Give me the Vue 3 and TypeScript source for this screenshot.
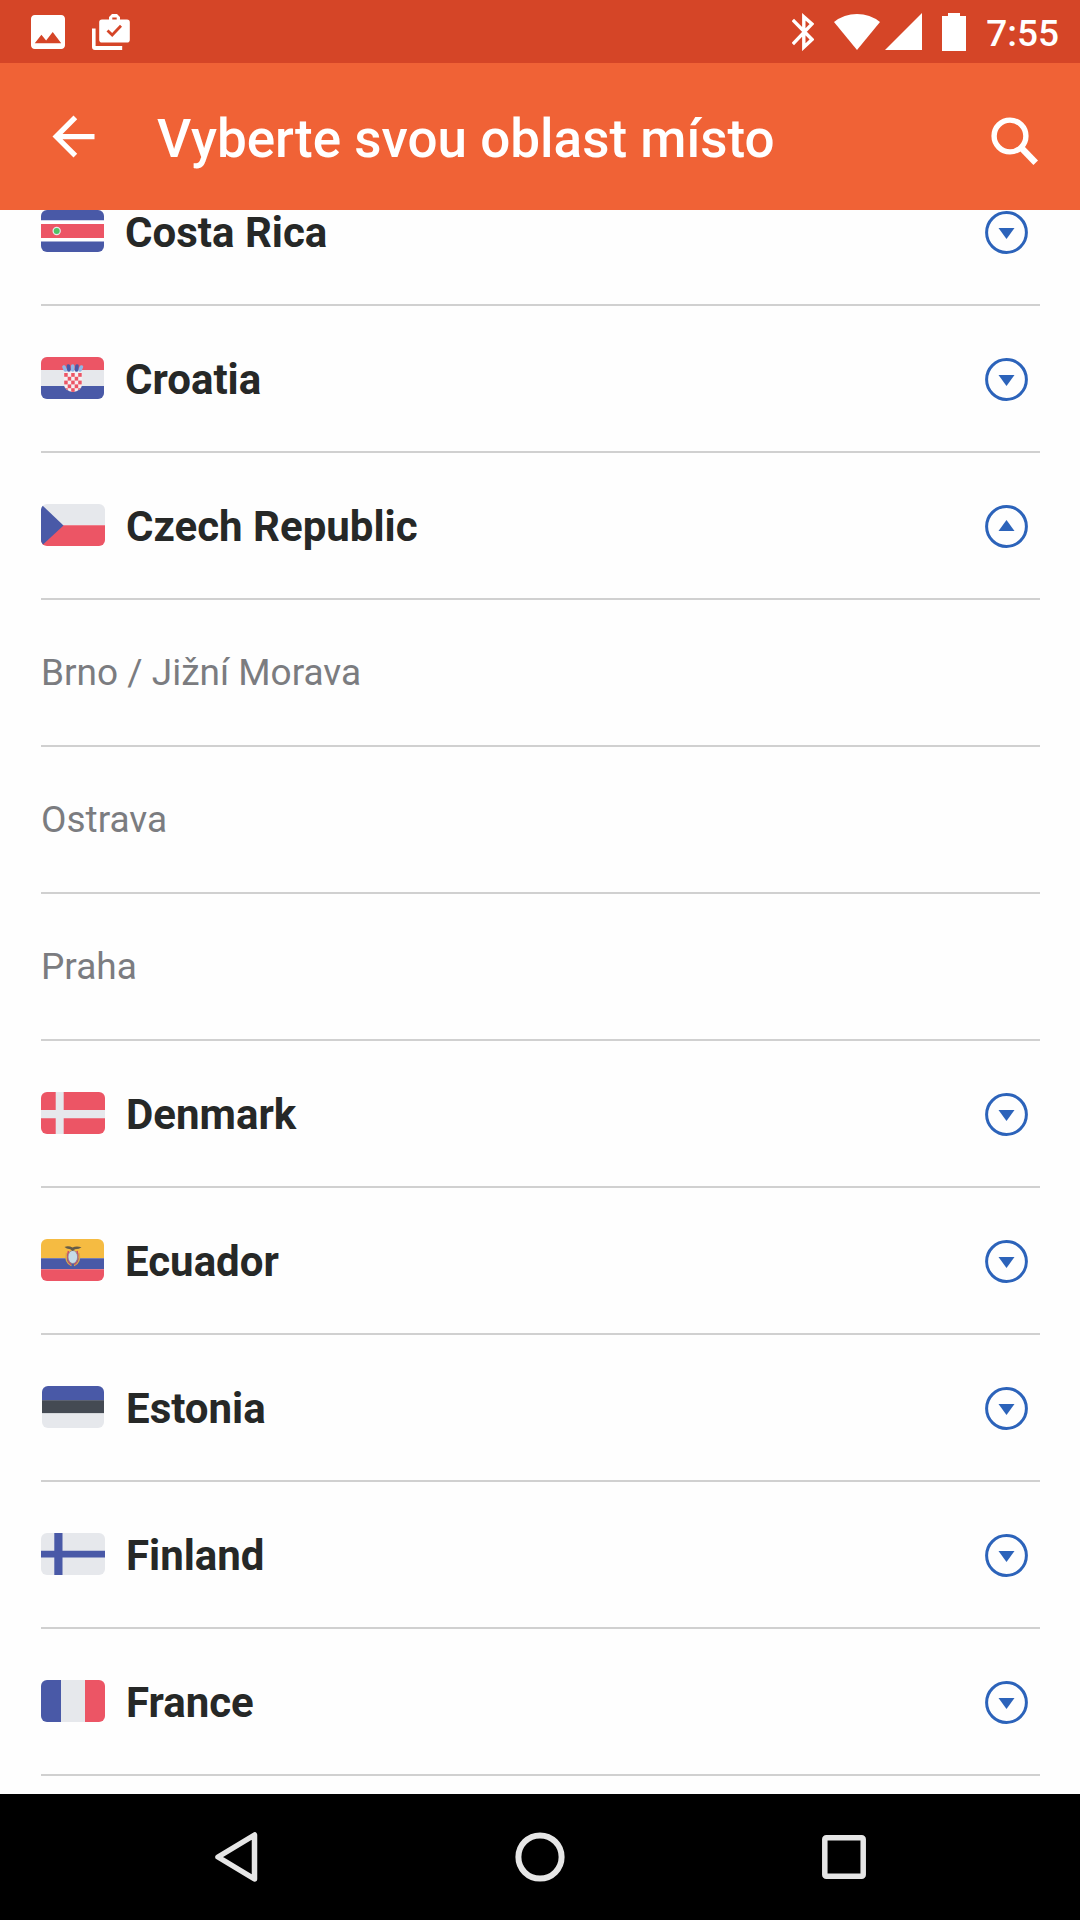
<script setup lang="ts">
import { ref } from 'vue'

interface Country {
  code: string
  name: string
  narrow?: boolean
  regions: string[]
}

const countries: Country[] = [
  { code: 'cr', name: 'Costa Rica', narrow: true, regions: [] },
  { code: 'hr', name: 'Croatia', narrow: true, regions: [] },
  { code: 'cz', name: 'Czech Republic', regions: ['Brno / Jižní Morava', 'Ostrava', 'Praha'] },
  { code: 'dk', name: 'Denmark', regions: [] },
  { code: 'ec', name: 'Ecuador', narrow: true, regions: [] },
  { code: 'ee', name: 'Estonia', regions: [] },
  { code: 'fi', name: 'Finland', regions: [] },
  { code: 'fr', name: 'France', regions: [] },
]

const open = ref<string>('cz')

function toggle(code: string): void {
  open.value = open.value === code ? '' : code
}

// Red cells of the 5 x 5 chequered shield
const checks = Array.from({ length: 25 }, (_, i) => ({ col: i % 5, row: Math.floor(i / 5) })).filter(
  (c) => (c.col + c.row) % 2 === 0,
)
</script>

<template>
  <div class="screen">
    <div class="status">
      <div class="status-left">
        <svg width="34" height="34" viewBox="3 3 18 18" fill="#fff">
          <path d="M21 19V5c0-1.1-.9-2-2-2H5c-1.1 0-2 .9-2 2v14c0 1.1.9 2 2 2h14c1.1 0 2-.9 2-2zM8.500 13.500l2.500 3.010L14.500 12l4.500 6H5l3.500-4.500z" />
        </svg>
        <svg width="38" height="36" viewBox="0 0 38 36">
          <path fill="#fff" fill-rule="evenodd" d="M17 5.500V3l3-3h5l3 3v2.500h7a2.800 2.800 0 0 1 2.800 2.800v17.400a2.800 2.800 0 0 1-2.800 2.800H10a2.800 2.800 0 0 1-2.800-2.800V8.300A2.800 2.800 0 0 1 10 5.500zM20.300 3.500v2h4.400v-2z" />
          <path fill="#fff" d="M0 14.500h3.600v17.600h26.600V36H3a3 3 0 0 1-3-3z" />
          <path fill="none" stroke="#d54527" stroke-width="2.800" d="M15.500 16.500l4.700 4.500 8.800-9.200" />
        </svg>
      </div>
      <div class="status-right">
        <svg width="22" height="38" viewBox="0 0 22 38" fill="none" stroke="#fff" stroke-width="3.400">
          <path d="M.8 7L20 26.500l-8.200 7.700V3.800L20 11 .8 31" />
        </svg>
        <div class="signals">
          <svg width="46" height="36" viewBox="0 0 46 36" fill="#fff">
            <path d="M23 36L0 8Q10 0 23 0t23 8z" />
          </svg>
          <svg width="37" height="37" viewBox="0 0 37 37" fill="#fff">
            <path d="M37 0v37H0z" />
          </svg>
        </div>
        <svg width="24" height="38" viewBox="0 0 24 38" fill="#fff">
          <path d="M6 0h12v3h6v35H0V3h6z" />
        </svg>
        <span class="time">7:55</span>
      </div>
    </div>

    <header class="appbar">
      <button class="icon-btn" type="button" aria-label="Zpět">
        <svg width="63" height="63" viewBox="0 0 24 24" fill="#fff">
          <path d="M20 11H7.830l5.590-5.590L12 4l-8 8 8 8 1.410-1.410L7.830 13H20v-2z" />
        </svg>
      </button>
      <h1>Vyberte svou oblast místo</h1>
      <button class="icon-btn" type="button" aria-label="Hledat">
        <svg width="47" height="56" viewBox="0 0 47 56" fill="none" stroke="#fff">
          <circle cx="19" cy="27" r="15.900" stroke-width="5.400" />
          <path d="M29.500 38L44.700 53.700" stroke-width="6.400" />
        </svg>
      </button>
    </header>

    <main class="viewport">
      <ul class="list">
        <template v-for="c in countries" :key="c.code">
          <li>
            <button class="row" type="button" :aria-expanded="open === c.code" @click="toggle(c.code)">
              <span class="flag" :class="{ narrow: c.narrow, inset: c.code === 'ee' }">
                <svg width="64" height="42" viewBox="0 0 64 42">
                  <g v-if="c.code === 'cr'">
                    <path fill="#fff" d="M0 0h64v42H0z" />
                    <path fill="#4959a7" d="M0 0h64v10.300H0zM0 31.500h64V42H0z" />
                    <path fill="#ec5565" d="M0 14h64v14H0z" />
                    <circle cx="15.700" cy="21" r="4.200" fill="#e6e8ec" />
                    <circle cx="15.700" cy="21" r="3" fill="#4fc367" />
                  </g>
                  <g v-else-if="c.code === 'hr'">
                    <path fill="#e6e8ec" d="M0 0h64v42H0z" />
                    <path fill="#ec5565" d="M0 0h64v13H0z" />
                    <path fill="#4959a7" d="M0 29h64v13H0z" />
                    <clipPath id="shield">
                      <path d="M22.800 14.500h18.400v12a9.200 8.500 0 0 1-18.400 0z" />
                    </clipPath>
                    <g clip-path="url(#shield)">
                      <path fill="#f4eef1" d="M22 14h20v22H22z" />
                      <rect
                        v-for="k in checks"
                        :key="`${k.col}-${k.row}`"
                        :x="23.2 + k.col * 3.5"
                        :y="16 + k.row * 3.8"
                        width="3.500"
                        height="3.800"
                        fill="#ec5565"
                      />
                    </g>
                    <g stroke-width="3.600" stroke-linecap="round">
                      <path stroke="#8fb8e6" d="M23 10l1.400 3M31.700 9v4M40.400 10L39 13" />
                      <path stroke="#4959a7" d="M27.400 9l.5 4M36 9l-.5 4" />
                    </g>
                  </g>
                  <g v-else-if="c.code === 'cz'">
                    <path fill="#e6e8ec" d="M0 0h64v21.300H0z" />
                    <path fill="#ec5565" d="M0 21.300h64V42H0z" />
                    <path fill="#4959a7" d="M0 1l2 1 20.500 19.500L2 40.500 0 41z" />
                  </g>
                  <g v-else-if="c.code === 'dk'">
                    <path fill="#ec5565" d="M0 0h64v42H0z" />
                    <path fill="#e6e8ec" d="M14.700 0h8v42h-8zM0 18h64v8.300H0z" />
                  </g>
                  <g v-else-if="c.code === 'ec'">
                    <path fill="#f5bb42" d="M0 0h64v19.300H0z" />
                    <path fill="#4959a7" d="M0 19.300h64v11H0z" />
                    <path fill="#ec5565" d="M0 30.300h64V42H0z" />
                    <path fill="none" stroke="#d9a84a" stroke-width="1.500" d="M25.500 14q-2 10 5 12.500M38 14q2 10-5 12.500" />
                    <path fill="none" stroke="#c94b6a" stroke-width="1.600" d="M27.500 12q-2.500 9 2.500 13.500M36 12q2.500 9-2.500 13.500" />
                    <ellipse cx="31.800" cy="18" rx="4.800" ry="6.500" fill="#c6dce8" stroke="#8c7f88" stroke-width=".800" />
                    <path fill="#655c48" d="M23.500 8q4-1.500 8 .5 4-2 9-.2-2 2-6.500 2L31.700 12l-2.500-1.700q-4-.3-5.700-2.300z" />
                  </g>
                  <g v-else-if="c.code === 'ee'">
                    <path fill="#4959a7" d="M0 0h64v14.500H0z" />
                    <path fill="#444a53" d="M0 14.200h64v13.300H0z" />
                    <path fill="#e6e8ec" d="M0 27.300h64V42H0z" />
                  </g>
                  <g v-else-if="c.code === 'fi'">
                    <path fill="#e6e8ec" d="M0 0h64v42H0z" />
                    <path fill="#4959a7" d="M13.300 0h8.200v42h-8.200zM0 17.800h64v6.600H0z" />
                  </g>
                  <g v-else>
                    <path fill="#4959a7" d="M0 0h20v42H0z" />
                    <path fill="#e6e8ec" d="M20 0h24v42H20z" />
                    <path fill="#ec5565" d="M44 0h20v42H44z" />
                  </g>
                </svg>
              </span>
              <span class="name">{{ c.name }}</span>
              <svg width="43" height="43" viewBox="0 0 43 43">
                <circle cx="21.500" cy="21.500" r="19.900" fill="none" stroke="#2c63ba" stroke-width="3" />
                <path v-if="open === c.code" fill="#2c63ba" d="M13.500 26h16L21.500 15z" />
                <path v-else fill="#2c63ba" d="M13.500 17h16l-8 11z" />
              </svg>
            </button>
          </li>
          <template v-if="open === c.code">
            <li v-for="r in c.regions" :key="r">
              <button class="row region" type="button">{{ r }}</button>
            </li>
          </template>
        </template>
      </ul>
    </main>

    <nav class="navbar">
      <button type="button" aria-label="Zpět">
        <svg width="44" height="50" viewBox="0 0 44 50" fill="none" stroke="#e6e6e6" stroke-width="5.500" stroke-linejoin="round">
          <path d="M40.500 3v44L4 25z" />
        </svg>
      </button>
      <button type="button" aria-label="Domů">
        <svg width="50" height="50" viewBox="0 0 50 50" fill="none" stroke="#e6e6e6" stroke-width="6">
          <circle cx="25" cy="25" r="21.600" />
        </svg>
      </button>
      <button type="button" aria-label="Přehled">
        <svg width="44" height="44" viewBox="0 0 44 44" fill="none" stroke="#e6e6e6" stroke-width="5.500">
          <rect x="2.800" y="2.800" width="38.400" height="38.400" rx="1.500" />
        </svg>
      </button>
    </nav>
  </div>
</template>

<style>
body {
  margin: 0;
}
</style>

<style scoped>
.screen {
  display: flex;
  flex-direction: column;
  min-height: 100vh;
  background: #fefefe;
  font-family: Roboto, "Noto Sans", sans-serif;
}

svg {
  display: block;
  flex: none;
}

button {
  margin: 0;
  padding: 0;
  border: 0;
  background: none;
  font: inherit;
  color: inherit;
  cursor: pointer;
}

.status {
  display: flex;
  align-items: center;
  justify-content: space-between;
  height: 63px;
  padding: 0 21px 0 31px;
  background: #d54527;
  color: #fff;
}

.status-left {
  display: flex;
  align-items: center;
  gap: 27px;
}

.status-right {
  display: flex;
  align-items: center;
  gap: 20px;
}

.signals {
  display: flex;
  align-items: center;
  gap: 5px;
}

.time {
  padding-top: 4px;
  font-size: 37px;
  line-height: 43px;
  font-weight: 500;
}

.appbar {
  display: flex;
  align-items: center;
  height: 147px;
  padding: 0 42px;
  background: #f06236;
  color: #fff;
}

h1 {
  flex: 1;
  margin: 0;
  padding: 6px 0 0 52px;
  font-size: 53px;
  line-height: 61px;
  font-weight: 500;
}

.viewport {
  flex: 1;
  overflow: hidden;
}

/* The list is scrolled part-way into its first row */
.list {
  margin: -51px 0 0;
  padding: 0 40px 0 41px;
  list-style: none;
}

.row {
  display: flex;
  align-items: center;
  box-sizing: border-box;
  width: 100%;
  min-height: 147px;
  padding: 2px 12px 0 0;
  border-bottom: 2px solid #d0d0d0;
  text-align: left;
}

.flag {
  width: 64px;
  height: 42px;
  margin: 0 21px 3px 0;
  border-radius: 6px;
  overflow: hidden;
}

.flag.narrow {
  width: 63px;
}

.flag.inset {
  width: 62px;
  margin-left: 1px;
  margin-right: 22px;
}

.name {
  flex: 1;
  color: #262827;
  font-size: 42px;
  line-height: 43px;
  font-weight: 700;
}

.region {
  padding-top: 0;
  color: #7b7c80;
  font-size: 37px;
  line-height: 43px;
}

.navbar {
  display: flex;
  height: 126px;
  padding: 0 84px;
  background: #000;
}

.navbar button {
  display: flex;
  flex: 1;
  align-items: center;
  justify-content: center;
}
</style>
